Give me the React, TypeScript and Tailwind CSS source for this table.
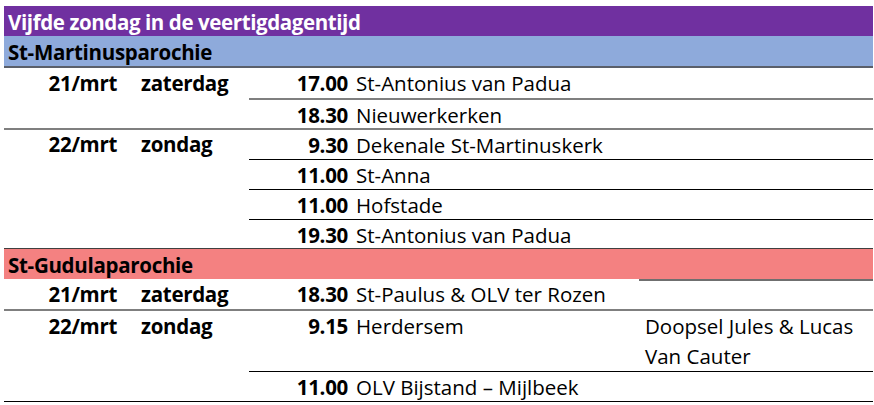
import React from "react";

type Slot = { time: string; place: string; note?: React.ReactNode; h: string; topBorder?: string };

const FONT = { fontFamily: "'Open Sans', Lato, sans-serif" };

function Group({
  date,
  day,
  slots,
  topBorder,
  dateH,
}: {
  date: string;
  day: string;
  slots: Slot[];
  topBorder: string;
  dateH: string;
}) {
  return (
    <div className={`flex ${topBorder}`}>
      <div className="flex w-[245px] shrink-0 items-start">
        <div className={`flex w-[125px] items-center justify-end pr-[12px] font-bold tracking-[-0.3px] ${dateH}`}>{date}</div>
        <div className={`flex w-[120px] items-center pl-[12px] font-bold tracking-[-0.3px] ${dateH}`}>{day}</div>
      </div>
      <div className="flex flex-1 flex-col">
        {slots.map((s, i) => (
          <div key={i} className={`flex ${s.h} ${s.topBorder ?? ""}`}>
            <div className="flex h-[30px] w-[103px] items-center justify-end pr-[4px] font-bold tracking-[-0.3px]">{s.time}</div>
            <div className="flex h-[30px] w-[287px] items-center pl-[4px]">{s.place}</div>
            <div className="flex-1 pl-[6px] leading-[30px]">{s.note}</div>
          </div>
        ))}
      </div>
    </div>
  );
}

export default function App() {
  return (
    <div className="h-[405px] w-[874px] bg-white text-[20.5px] text-black" style={FONT}>
      <div className="pl-[4px] pt-[6px]">
        <div className="w-[869px]">
          <div className="flex h-[30px] items-center bg-[#7030a0] pl-[4px] pt-[2px] font-bold tracking-[-0.4px] text-white">
            Vijfde zondag in de veertigdagentijd
          </div>
          <div className="flex h-[32px] items-center border-b-2 border-[#5a5f6a] bg-[#8eaadb] pl-[4px] pt-[2px] font-bold tracking-[-0.3px]">
            St-Martinusparochie
          </div>
          <Group
            date="21/mrt"
            day="zaterdag"
            dateH="h-[30px]"
            topBorder=""
            slots={[
              { time: "17.00", place: "St-Antonius van Padua", h: "h-[30px]" },
              { time: "18.30", place: "Nieuwerkerken", h: "h-[30px]", topBorder: "border-t-2 border-[#7f7f7f]" },
            ]}
          />
          <Group
            date="22/mrt"
            day="zondag"
            dateH="h-[29px]"
            topBorder="border-t-2 border-[#7f7f7f]"
            slots={[
              { time: "9.30", place: "Dekenale St-Martinuskerk", h: "h-[29px]" },
              { time: "11.00", place: "St-Anna", h: "h-[30px]", topBorder: "border-t border-black" },
              { time: "11.00", place: "Hofstade", h: "h-[30px]", topBorder: "border-t border-black" },
              { time: "19.30", place: "St-Antonius van Padua", h: "h-[29px]", topBorder: "border-t border-black" },
            ]}
          />
          <div className="flex h-[31px] items-center border-t border-[#404040] bg-[#f48181] pl-[4px] pt-[2px] font-bold tracking-[-0.3px]">
            St-Gudulaparochie
          </div>
          <div className="flex h-[30px]">
            <div className="flex w-[125px] items-center justify-end pr-[12px] font-bold tracking-[-0.3px]">21/mrt</div>
            <div className="flex w-[120px] items-center pl-[12px] font-bold tracking-[-0.3px]">zaterdag</div>
            <div className="flex w-[103px] items-center justify-end pr-[4px] font-bold tracking-[-0.3px]">18.30</div>
            <div className="flex w-[287px] items-center pl-[4px]">St-Paulus &amp; OLV ter Rozen</div>
            <div className="flex-1 border-t-2 border-[#6f6f6f]"></div>
          </div>
          <Group
            date="22/mrt"
            day="zondag"
            dateH="h-[30px]"
            topBorder="border-t-2 border-[#7f7f7f] border-b border-b-black"
            slots={[
              {
                time: "9.15",
                place: "Herdersem",
                h: "h-[60px]",
                note: (
                  <>
                    Doopsel Jules &amp; Lucas
                    <br />
                    Van Cauter
                  </>
                ),
              },
              { time: "11.00", place: "OLV Bijstand – Mijlbeek", h: "h-[30px]", topBorder: "border-t border-black" },
            ]}
          />
        </div>
      </div>
    </div>
  );
}
